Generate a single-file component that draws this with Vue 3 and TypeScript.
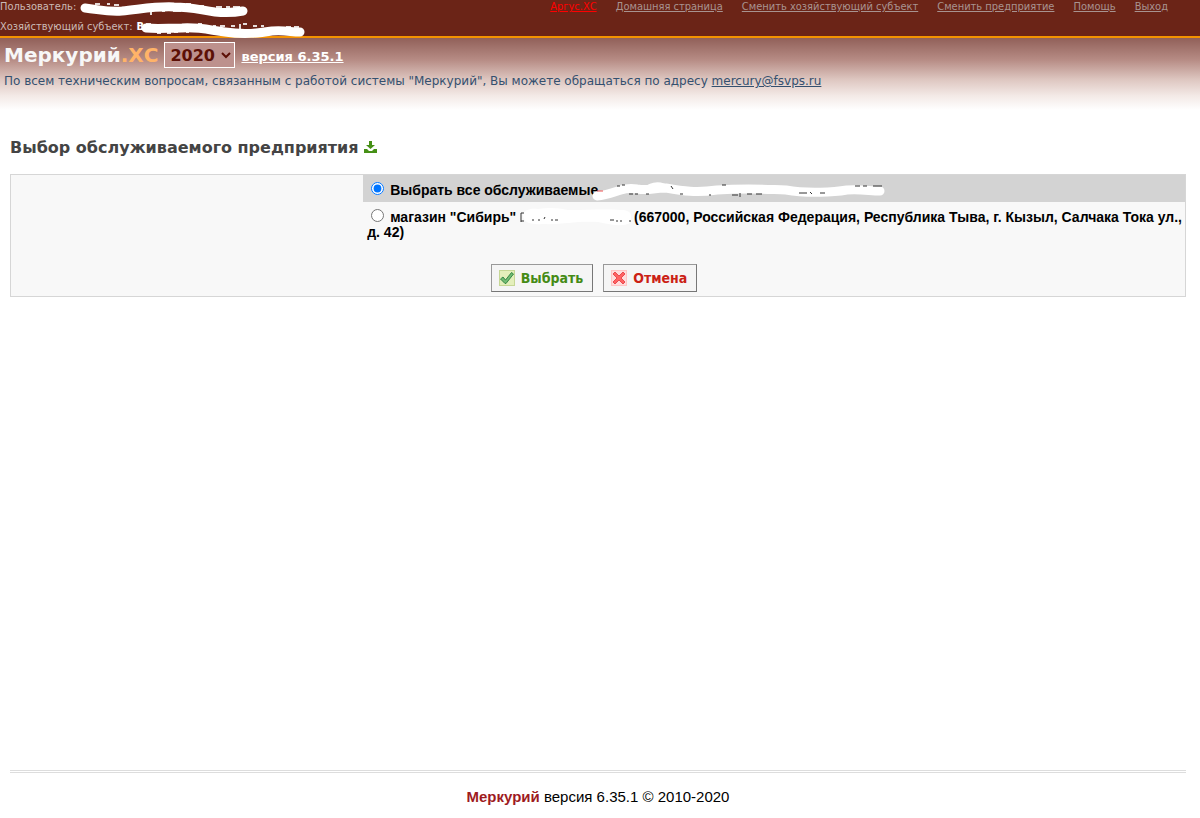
<script setup lang="ts">
import { ref } from 'vue'

interface NavLink {
  text: string
  accent?: boolean
}

const links: NavLink[] = [
  { text: 'Аргус.ХС', accent: true },
  { text: 'Домашняя страница' },
  { text: 'Сменить хозяйствующий субъект' },
  { text: 'Сменить предприятие' },
  { text: 'Помощь' },
  { text: 'Выход' },
]
const year = ref('2020')
const choice = ref('all')
</script>

<template>
  <div class="page">
    <header>
      <div class="topbar">
        <div class="user">
          <div class="user-row">
            <span>Пользователь:</span>
            <svg class="mask" width="170" height="18" viewBox="0 0 170 18" aria-hidden="true">
              <path class="ink-light" d="M15 4h5M27 4h3M34 5h5M53 12v2M60 11h3M71 12v3M82 11h3M93 11h8M106 4h5M118 6h6M136 7h6M146 7h4M153 7h7" />
              <path class="stroke" d="M5 8C22 10 28 12 42 11C62 9 78 6 94 7C112 7 120 10 135 12C145 13 153 13 163 11" />
            </svg>
          </div>
          <div class="user-row">
            <span>Хозяйствующий субъект:</span>
            <b>В</b>
            <svg class="mask" width="166" height="18" viewBox="0 0 166 18" aria-hidden="true">
              <path class="ink-light" d="M6 4h5M17 13h4M27 13h4M34 12h4M46 12h3M58 4h4M73 6h3M80 6h5M91 6h4M100 4v5M103 4h4M113 6h4M121 6h3M146 7h5M154 7h5" />
              <path class="stroke" d="M6 8C18 9 28 8 42 8C60 7 69 10 85 12C105 15 119 13 132 11C145 10 151 12 160 12" />
            </svg>
          </div>
        </div>
        <nav>
          <a v-for="link in links" :key="link.text" href="#" :class="{ accent: link.accent }">{{ link.text }}</a>
        </nav>
      </div>
      <div class="banner">
        <div class="brand">
          <span class="logo">Меркурий<span class="suffix">.ХС</span></span>
          <span class="year">
            <select v-model="year" aria-label="Год">
              <option>2020</option>
            </select>
            <svg width="10" height="7" viewBox="0 0 10 7" aria-hidden="true"><path d="M1 1l4 4 4-4" /></svg>
          </span>
          <a class="version" href="#">версия 6.35.1</a>
        </div>
        <p>
          По всем техническим вопросам, связанным с работой системы "Меркурий", Вы можете обращаться по адресу
          <a href="mailto:mercury@fsvps.ru">mercury@fsvps.ru</a>
        </p>
      </div>
    </header>

    <main>
      <h1>
        Выбор обслуживаемого предприятия
        <a class="download" href="#" aria-label="Скачать">
          <svg width="13" height="12" viewBox="0 0 13 12" aria-hidden="true">
            <path d="M5 0h3v4h3L6.500 8 2 4h3zM0 8h3l2 2h3l2-2h3v4H0z" />
          </svg>
        </a>
      </h1>
      <form class="panel" @submit.prevent>
        <div class="options">
          <div class="option" :class="{ selected: choice === 'all' }">
            <input id="choice-all" v-model="choice" type="radio" name="enterprise" value="all" />
            <label for="choice-all">Выбрать все обслуживаемые</label><svg class="mask-inline pulled" width="294" height="10" viewBox="0 4 294 10" aria-hidden="true">
              <path class="stroke" d="M5 15C22 14 30 5 45 8C58 10 60 7 74 7C91 10 104 12 125 9C155 7 166 8 194 9C216 13 243 11 255 9C269 8 278 10 288 10" />
              <path class="white" d="M50 8C58 0 70-1 78 6L74 11 52 11z" />
              <path class="ink" d="M25 5h3M30 4h3M37 13h4M43 13h3M54 13h3M79 5l2 3M88 13h3M118 13v2M130 4h4M140 14h6M148 12v4M155 13h5M164 13h6M207 12h8M218 11l2 2M228 12h5M263 5h5M271 5h4M281 5h9" />
              <path class="red" d="M5 10h6" />
            </svg>
          </div>
          <div class="option" :class="{ selected: choice === 'shop' }">
            <input id="choice-shop" v-model="choice" type="radio" name="enterprise" value="shop" />
            <label for="choice-shop">магазин "Сибирь" <svg class="mask-inline" width="110" height="10" viewBox="0 4 110 10" aria-hidden="true">
              <path class="white" d="M3 7C4 2 10 0 18 1C32-1 38 0 48 2C67 2 84 1 101 2C113 2 112 9 110 15C103 19 92 17 78 14C53 13 43 17 22 16C10 17 3 14 3 7z" />
              <path class="ink" d="M1 5v9M1 5h3M1 13h3M12 12h2M18 12h2M24 11l1-2M31 12h2M35 12h3M90 12h4M96 13h2M101 12v2M109 13h2" />
            </svg> (667000, Российская Федерация, Республика Тыва, г. Кызыл, Салчака Тока ул., д. 42)</label>
          </div>
        </div>
        <div class="actions">
          <button class="ok" type="submit">
            <svg width="16" height="16" viewBox="0 0 16 16" aria-hidden="true">
              <rect x=".5" y=".5" width="15" height="15" fill="#e4efbb" stroke="#c6d795" />
              <path d="M1.500 9l2.500-2 2.500 3 6-7.500 2 1.500-7.500 9.500H6z" fill="#69b56b" stroke="#3b8a49" />
              <path d="M3 8.500l3.500 3.500 6.500-8" fill="none" stroke="#7cc07c" />
            </svg>
            Выбрать
          </button>
          <button class="cancel" type="button">
            <svg width="16" height="16" viewBox="0 0 16 16" aria-hidden="true">
              <rect x=".5" y=".5" width="15" height="15" fill="#ffdcdc" stroke="#ffc5c5" />
              <path d="M4 2l4 4 4-4 2 2-4 4 4 4-2 2-4-4-4 4-2-2 4-4-4-4z" fill="#ff6262" stroke="#e94b50" />
            </svg>
            Отмена
          </button>
        </div>
      </form>
    </main>

    <footer><b>Меркурий</b> версия 6.35.1 © 2010-2020</footer>
  </div>
</template>

<style>
body {
  margin: 0;
  background: #fff;
}
</style>

<style scoped>
.page {
  display: flex;
  flex-direction: column;
  min-height: 100vh;
  font-family: "Liberation Sans", Arial, sans-serif;
}
.topbar {
  display: flex;
  justify-content: space-between;
  min-height: 36px;
  background: #6b2417;
  border-bottom: 2px solid #f39200;
  color: #cbbab6;
  font: 11px/14px "DejaVu Sans Condensed", "DejaVu Sans", Tahoma, sans-serif;
}
.user-row {
  display: flex;
  gap: 4px;
  height: 20px;
  white-space: nowrap;
}
.user-row:last-child {
  height: 16px;
}
.user-row b {
  color: #fff;
}
.user-row b + .mask {
  margin-left: -8px;
}
.mask {
  overflow: visible;
}
.stroke {
  fill: none;
  stroke: #fff;
  stroke-width: 9;
  stroke-linecap: round;
}
.ink-light {
  fill: none;
  stroke: #e6dcda;
  stroke-width: 2;
}
nav {
  display: flex;
  gap: 19px;
  padding-right: 32px;
  white-space: nowrap;
}
nav a {
  color: #a89390;
}
nav .accent {
  color: #f00;
}
.banner {
  box-sizing: border-box;
  min-height: 72px;
  padding: 4px 4px 0;
  background: linear-gradient(#916059, #b68b84 30%, #dec7c1 58%, #f3e9e6 80%, #fff);
  font-family: "DejaVu Sans", Verdana, sans-serif;
}
.brand {
  display: flex;
  align-items: center;
  height: 26px;
}
.logo {
  color: #f7f7f7;
  font-size: 20px;
  line-height: 24px;
  font-weight: bold;
}
.suffix {
  color: #ffb368;
}
.year {
  position: relative;
  display: flex;
  margin: 0 6px;
}
.year select {
  appearance: none;
  width: 71px;
  height: 26px;
  padding: 0 0 0 5px;
  border: 1px solid #fff;
  border-radius: 0;
  background: #bd918d;
  color: #5c1006;
  font: bold 16px "DejaVu Sans", Verdana, sans-serif;
}
.year svg {
  position: absolute;
  right: 4px;
  top: 10px;
  fill: none;
  stroke: #5c1006;
  stroke-width: 2;
  pointer-events: none;
}
.version {
  padding-top: 4px;
  color: #fff;
  font-size: 13px;
  line-height: 16px;
  font-weight: bold;
}
.banner p {
  margin: 4px 0 0;
  color: #34506f;
  font-size: 12px;
  line-height: 18px;
}
.banner p a {
  color: #34506f;
}
main {
  flex: 1;
  padding: 0 14px 0 10px;
}
h1 {
  margin: 28px 0 16px;
  color: #444;
  font: bold 16px/20px "DejaVu Sans", Verdana, sans-serif;
}
.download svg {
  fill: #469016;
}
.panel {
  border: 1px solid #d6d6d6;
  background: #f8f8f8;
}
.options {
  margin-left: 30%;
  color: #000;
  font-size: 14px;
  font-weight: bold;
  line-height: 15px;
}
.option {
  padding: 7px 0 4px 4px;
}
.selected {
  background: #d3d3d3;
}
.option input {
  width: 13px;
  height: 13px;
  margin: 0 6px 0 4px;
}
.mask-inline {
  overflow: visible;
}
.pulled {
  margin-left: -6px;
}
.white {
  fill: #fff;
}
.ink {
  fill: none;
  stroke: #333;
  stroke-width: 1;
}
.red {
  stroke: #e55;
}
.actions {
  display: flex;
  justify-content: center;
  gap: 10px;
  padding: 20px 8px 4px 0;
}
.actions button {
  display: flex;
  align-items: center;
  gap: 6px;
  height: 28px;
  padding: 0 9px 0 7px;
  border: 1px solid #999;
  border-right-color: #777;
  border-bottom-color: #777;
  border-radius: 0;
  background: #f5f5f5;
  font: bold 14px "DejaVu Sans Condensed", "DejaVu Sans", Tahoma, sans-serif;
}
.actions .ok {
  color: #458b16;
}
.actions .cancel {
  color: #cb2114;
}
footer {
  margin: 0 14px 0 10px;
  padding: 15px 0 12px;
  border-top: 3px double #ddd;
  color: #000;
  font-size: 15px;
  line-height: 18px;
  text-align: center;
}
footer b {
  color: #9e1b1e;
}
</style>
